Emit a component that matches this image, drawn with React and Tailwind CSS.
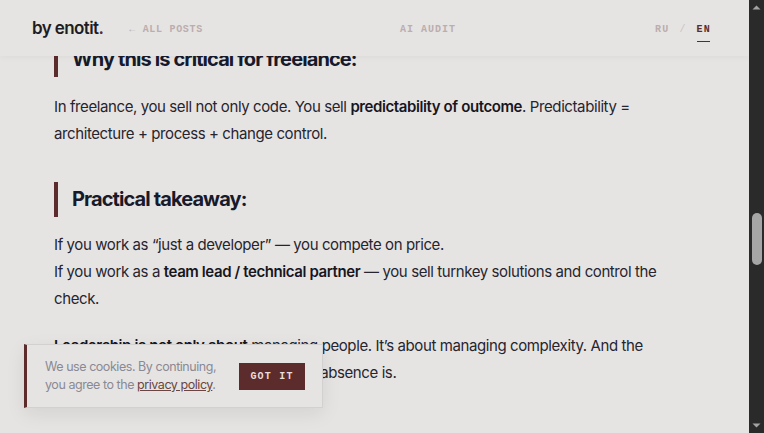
import React from 'react';

const sans = { fontFamily: 'Inter, "Noto Sans", sans-serif' };
const mono = { fontFamily: '"Liberation Mono", "DejaVu Sans Mono", monospace' };

function Header() {
  return (
    <header className="absolute top-0 inset-x-0 h-[56px] z-10 bg-[#e6e4e2] shadow-[0_2px_6px_rgba(0,0,0,0.035)] flex items-center px-[32px] pt-[3px]">
      <div className="text-[17px] font-semibold tracking-[-0.6px] text-[#1d1c24] -mt-[1px]" style={sans}>
        by enotit<span className="text-[#5c2b2b]">.</span>
      </div>
      <a className="ml-[26px] text-[10px] font-bold tracking-[0.7px] text-[#bcadaf]" style={mono}>
        ← ALL POSTS
      </a>
      <a className="ml-[197px] text-[10px] font-bold tracking-[1px] text-[#bcadaf]" style={mono}>
        AI AUDIT
      </a>
      <div className="ml-auto flex items-center gap-[10px] text-[10px] font-bold tracking-[1.2px] mr-[6px]" style={mono}>
        <span className="text-[#bcadaf]">RU</span>
        <span className="text-[#cdc2c3] font-normal">/</span>
        <span className="relative text-[#5a2c2c]">
          EN
          <span className="absolute left-0 right-[1px] -bottom-[5px] h-[1px] bg-[#5a2c2c]" />
        </span>
      </div>
    </header>
  );
}

function Heading({ children, className = '' }) {
  return (
    <h2 className={`h-[35px] border-l-[4px] border-[#5c2b2b] pl-[14px] flex items-center text-[20px] font-bold tracking-[-0.9px] text-[#161a2b] ${className}`}>
      {children}
    </h2>
  );
}

function CookieBanner() {
  return (
    <div className="absolute left-[24px] bottom-[25px] w-[299px] h-[64px] z-20 bg-[#e6e4e2] border border-[#d3d1cf] border-l-[3px] border-l-[#5c2b2b] shadow-[0_6px_18px_rgba(0,0,0,0.08)] flex items-center pl-[18px] pr-[17px]">
      <p className="text-[12.5px] leading-[18px] text-[#8a8994] tracking-[-0.45px]" style={sans}>
        We use cookies. By continuing,<br />
        you agree to the <a className="underline text-[#6b4444]">privacy policy</a>.
      </p>
      <button className="ml-auto w-[66px] h-[27px] bg-[#5c2b2b] text-[#e8dede] text-[10px] font-bold tracking-[1.2px]" style={mono}>
        GOT IT
      </button>
    </div>
  );
}

function Scrollbar() {
  return (
    <div className="w-[15px] h-full bg-[#2a2a2a] flex flex-col items-center">
      <svg width="15" height="15" viewBox="0 0 15 15" className="shrink-0">
        <path d="M3.5 9.5 L7.5 5.5 L11.5 9.5 Z" fill="#a3a3a3" />
      </svg>
      <div className="mt-[198px] w-[10px] h-[52px] rounded-[5px] bg-[#a6a6a6]" />
      <div className="flex-1" />
      <svg width="15" height="15" viewBox="0 0 15 15" className="shrink-0">
        <path d="M3.5 5.5 L11.5 5.5 L7.5 9.5 Z" fill="#a3a3a3" />
      </svg>
    </div>
  );
}

export default function App() {
  return (
    <div className="flex h-[433px] w-full overflow-hidden bg-[#e6e4e2]" style={sans}>
      <main className="relative flex-1 overflow-hidden">
        <Header />
        <article className="pt-[42px] pl-[54px] w-[680px] text-[15px] leading-[27px] text-[#26242f] tracking-[-0.4px]">
          <Heading>Why this is critical for freelance:</Heading>
          <p className="mt-[16px]">
            In freelance, you sell not only code. You sell <strong className="font-semibold text-[#17161f]">predictability of outcome</strong>. Predictability =<br />
            architecture + process + change control.
          </p>
          <Heading className="mt-[35px]">Practical takeaway:</Heading>
          <p className="mt-[14px]">
            If you work as “just a developer” — you compete on price.<br />
            If you work as a <strong className="font-semibold text-[#17161f]">team lead / technical partner</strong> — you sell turnkey solutions and control the<br />
            check.
          </p>
          <p className="mt-[20px]">
            <strong className="font-semibold text-[#17161f]">Leadership is not only about</strong> managing people. It’s about managing complexity. And the<br />
            client always notices how expensive its absence is.
          </p>
        </article>
        <CookieBanner />
      </main>
      <Scrollbar />
    </div>
  );
}
